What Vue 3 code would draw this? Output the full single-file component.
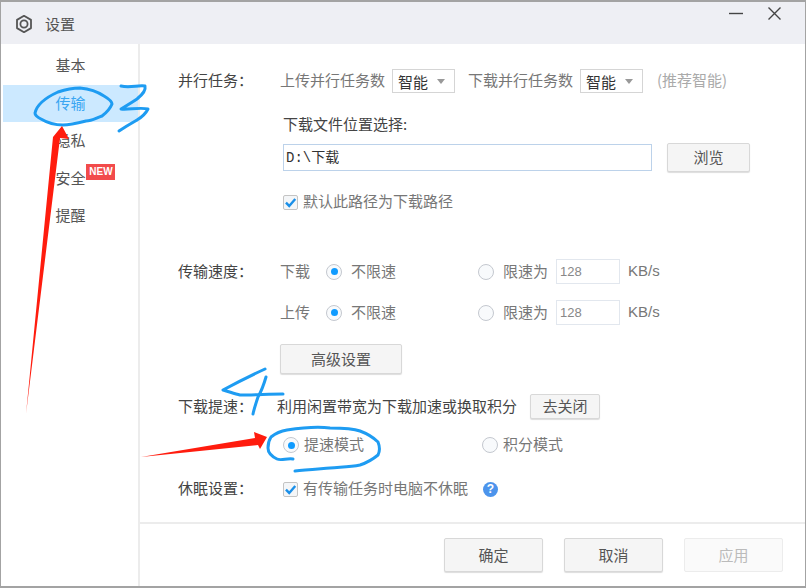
<script setup>
const menu = [
  { name: "基本" },
  { name: "传输", active: true },
  { name: "隐私" },
  { name: "安全", badge: "NEW" },
  { name: "提醒" },
];
const speeds = [
  { label: "下载", gap: "gap-first" },
  { label: "上传", gap: "gap-next" },
];
</script>

<template>
  <div class="window">
    <header class="titlebar">
      <svg class="gear" width="20" height="20" viewBox="0 0 20 20" fill="none" stroke="#555" stroke-width="1.8">
        <path d="M10 1.8 17 5.9V14.1L10 18.2 3 14.1V5.9Z" stroke-linejoin="round" />
        <circle cx="10" cy="10" r="3.6" />
      </svg>
      <span class="title">设置</span>
      <svg class="win-btns" width="54" height="16" viewBox="0 0 54 16" fill="none" stroke="#444" stroke-width="1.4">
        <path d="M0 7.5H14" />
        <path d="M39.5 1.5 51.5 13.5M51.5 1.5 39.5 13.5" />
      </svg>
    </header>

    <div class="body">
      <nav class="sidebar">
        <div v-for="item in menu" :key="item.name" class="menu-item" :class="{ active: item.active }">
          <span class="menu-text">
            {{ item.name }}
            <span v-if="item.badge" class="badge">{{ item.badge }}</span>
          </span>
        </div>
      </nav>

      <div class="main">
        <div class="content">
          <div class="row row-task">
            <span class="label">并行任务：</span>
            <span class="muted">上传并行任务数</span>
            <div class="select first">智能<i class="caret"></i></div>
            <span class="muted second-task">下载并行任务数</span>
            <div class="select second">智能<i class="caret"></i></div>
            <span class="hint">(推荐智能)</span>
          </div>

          <div class="row row-path-title">下载文件位置选择:</div>
          <div class="row row-path">
            <input class="path" value="D:\下载" readonly />
            <button class="btn browse">浏览</button>
          </div>
          <div class="row row-check">
            <span class="check"><svg width="13" height="13" viewBox="0 0 12 12" fill="none" stroke="#1a8fe8" stroke-width="2.2"><path d="M1.8 6.2 4.8 9.2 10.4 2.8" /></svg></span>
            <span class="muted">默认此路径为下载路径</span>
          </div>

          <div v-for="(s, i) in speeds" :key="s.label" class="row row-speed" :class="s.gap">
            <span class="label"><template v-if="i === 0">传输速度：</template></span>
            <span class="muted speed-name">{{ s.label }}</span>
            <span class="radio on"></span>
            <span class="muted nolimit">不限速</span>
            <span class="radio"></span>
            <span class="muted limit">限速为</span>
            <div class="num">128</div>
            <span class="muted unit">KB/s</span>
          </div>

          <div class="row row-adv">
            <span class="label"></span>
            <button class="btn adv">高级设置</button>
          </div>

          <div class="row row-accel">
            <span class="label accel-label">下载提速：</span>
            <span class="dark">利用闲置带宽为下载加速或换取积分</span>
            <button class="btn off">去关闭</button>
          </div>
          <div class="row row-mode">
            <span class="radio on"></span>
            <span class="muted mode-a">提速模式</span>
            <span class="radio"></span>
            <span class="muted mode-b">积分模式</span>
          </div>

          <div class="row row-sleep">
            <span class="label sleep-label">休眠设置：</span>
            <span class="check"><svg width="13" height="13" viewBox="0 0 12 12" fill="none" stroke="#1a8fe8" stroke-width="2.2"><path d="M1.8 6.2 4.8 9.2 10.4 2.8" /></svg></span>
            <span class="muted">有传输任务时电脑不休眠</span>
            <span class="help">?</span>
          </div>
        </div>

        <footer class="footer">
          <button class="btn foot">确定</button>
          <button class="btn foot">取消</button>
          <button class="btn foot disabled">应用</button>
        </footer>
      </div>
    </div>

    <!-- hand drawn marks on top of the screenshot -->
    <svg class="marks" width="806" height="588" viewBox="0 0 806 588" fill="none">
      <g stroke="#1e9cf2" stroke-width="3" stroke-linecap="round" stroke-linejoin="round">
        <path d="M35 113C37 104 47 97 58 92 67 89 74 88 80 88 90 89 98 92 104 96 109 99 112 102 112 104 110 109 106 113 102 116 96 118 92 121 86 121 78 123 70 125 63 125 54 125 46 122 41 119 37 117 35 115 35 113Z" />
        <path d="M121 86C130 88 138 85 145 86 146 90 142 95 137 99 131 103 126 106 121 109 128 110 140 107 148 109 146 113 142 117 137 120 130 124 125 127 119 131" />
        <path d="M265 369C252 375 236 383 223 390 230 392 235 394 240 395 254 395 270 394 283 394" />
        <path d="M266 377C264 384 262 390 258 397 256 403 254 409 253 414" />
        <path d="M293 459C287 458 281 461 277 459 271 456 268 453 268 448 268 443 269 440 271 437 276 433 281 431 287 430 300 428 315 426 330 428 342 428 352 428 360 431 368 434 374 438 378 442 380 447 380 451 378 455 372 460 366 463 360 465 350 467 340 467 330 468 318 469 305 470 295 471" />
      </g>
      <path fill="#ff1c0e" d="M62 126 69 139 60 138 26 414 53 137 53 137Z" />
      <path fill="#ff1c0e" d="M141 457 255 438 254 432 267 437 260 449 258 445Z" />
    </svg>
  </div>
</template>

<style scoped>
.window {
  position: relative;
  box-sizing: border-box;
  width: 806px;
  height: 588px;
  display: flex;
  flex-direction: column;
  background: #fff;
  border: 1px solid #a3a3a3;
  border-top-width: 2px;
  border-bottom-width: 2px;
  font-family: "Noto Sans CJK SC", "Liberation Sans", sans-serif;
  font-size: 15px;
  color: #555;
  overflow: hidden;
}

.titlebar {
  flex: none;
  height: 42px;
  display: flex;
  align-items: flex-start;
  background: #eeeff4;
}

.gear {
  margin: 12px 0 0 13px;
}

.title {
  margin: 11px 0 0 11px;
  line-height: 22px;
  color: #555;
}

.win-btns {
  margin: 4px 0 0 auto;
  margin-right: 22px;
}

.body {
  flex: 1;
  display: flex;
  min-height: 0;
}

.sidebar {
  flex: none;
  width: 137px;
  padding-top: 3px;
  border-right: 2px solid #ececec;
}

.menu-item {
  height: 37.5px;
  margin-left: 2px;
  display: flex;
  align-items: center;
  justify-content: center;
}

.menu-text {
  position: relative;
  padding-bottom: 2px;
  color: #555;
}

.menu-item.active {
  background: #cce9ff;
}

.menu-item.active .menu-text {
  color: #3aa6f2;
}

.badge {
  position: absolute;
  left: 31px;
  top: -3px;
  width: 29px;
  height: 16px;
  background: #f24b4b;
  color: #fff;
  font-family: "Liberation Sans", sans-serif;
  font-size: 10px;
  font-weight: bold;
  line-height: 16px;
  text-align: center;
}

.main {
  flex: 1;
  display: flex;
  flex-direction: column;
  min-width: 0;
}

.content {
  flex: 1;
  padding: 25px 0 0 38px;
}

.row {
  display: flex;
  align-items: center;
  white-space: nowrap;
}

.label {
  flex: none;
  width: 102px;
  padding-bottom: 2px;
  color: #444;
}

.muted {
  padding-bottom: 2px;
  color: #777;
}

.dark {
  padding-bottom: 2px;
  color: #444;
}

.hint {
  margin-left: 14px;
  padding-bottom: 2px;
  color: #aaa;
}

.row-task .label,
.row-task .muted,
.row-task .hint,
.row-check .muted,
.row-mode .muted,
.row-sleep .label,
.row-sleep .muted {
  padding-bottom: 4px;
}

.row-task {
  height: 24px;
}

.select {
  box-sizing: border-box;
  width: 63px;
  height: 24px;
  padding-left: 5px;
  display: flex;
  align-items: center;
  border: 1px solid #d5d5d5;
  color: #333;
}

.select.first {
  margin-left: 7px;
}

.select.second {
  margin-left: 7px;
}

.second-task {
  margin-left: 13px;
}

.caret {
  margin: 0 0 0 9px;
  border: 4.5px solid transparent;
  border-top: 5px solid #999;
  border-bottom: 0;
}

.row-path-title {
  height: 20px;
  margin: 20px 0 0 105px;
  color: #444;
}

.row-path {
  height: 29px;
  margin: 10px 0 0 105px;
}

.path {
  box-sizing: border-box;
  width: 369px;
  height: 27px;
  padding: 0 2px 3px;
  border: 1px solid #bcd2ea;
  outline: none;
  font-family: "Liberation Mono", "Noto Sans CJK SC", monospace;
  font-size: 14px;
  color: #333;
}

.btn {
  box-sizing: border-box;
  padding: 0 0 2px;
  background: #f5f5f5;
  border: 1px solid #d8d8d8;
  border-radius: 2px;
  box-shadow: 0 1px 1px #ddd;
  font-family: inherit;
  font-size: 15px;
  color: #555;
}

.browse {
  width: 83px;
  height: 29px;
  margin-left: 15px;
}

.row-check {
  height: 20px;
  margin: 20px 0 0 105px;
}

.check {
  flex: none;
  box-sizing: border-box;
  width: 15px;
  height: 15px;
  margin-right: 5px;
  display: flex;
  align-items: center;
  justify-content: center;
  background: #f4f6f8;
  border: 1px solid #c4c4c4;
  border-radius: 2px;
}

.row-speed {
  height: 25px;
}

.gap-first {
  margin-top: 47px;
}

.gap-next {
  margin-top: 16px;
}

.speed-name {
  width: 46px;
}

.radio {
  flex: none;
  box-sizing: border-box;
  width: 16px;
  height: 16px;
  display: flex;
  align-items: center;
  justify-content: center;
  background: #f8fafc;
  border: 1px solid #c4c8cf;
  border-radius: 50%;
}

.radio.on::after {
  content: "";
  width: 7px;
  height: 7px;
  background: #0f9bff;
  border-radius: 50%;
}

.nolimit {
  width: 127px;
  margin-left: 9px;
}

.limit {
  margin-left: 9px;
}

.num {
  box-sizing: border-box;
  width: 64px;
  height: 25px;
  margin-left: 8px;
  padding-left: 3px;
  border: 1px solid #e2e7ee;
  font-family: "Liberation Sans", sans-serif;
  font-size: 13px;
  line-height: 23px;
  color: #888;
}

.unit {
  margin-left: 8px;
  font-family: "Liberation Sans", sans-serif;
  font-size: 15px;
}

.row-adv {
  height: 30px;
  margin-top: 19px;
}

.adv {
  width: 122px;
  height: 30px;
}

.row-accel {
  height: 25px;
  margin-top: 20px;
}

.accel-label {
  width: 99px;
}

.off {
  width: 70px;
  height: 25px;
  margin-left: 13px;
}

.row-mode {
  height: 20px;
  margin: 16px 0 0 105px;
}

.mode-a {
  width: 178px;
  margin-left: 5px;
}

.mode-b {
  margin-left: 5px;
}

.row-sleep {
  height: 20px;
  margin-top: 24px;
}

.sleep-label {
  width: 105px;
}

.help {
  flex: none;
  width: 15px;
  height: 15px;
  margin-left: 15px;
  background: #4c94ec;
  border-radius: 50%;
  font-family: "Liberation Sans", sans-serif;
  font-size: 12px;
  font-weight: bold;
  line-height: 15px;
  text-align: center;
  color: #fff;
}

.footer {
  flex: none;
  height: 64px;
  display: flex;
  justify-content: flex-end;
  gap: 21px;
  padding: 14px 22px 0 0;
  box-sizing: border-box;
  border-top: 2px solid #ececec;
}

.foot {
  width: 99px;
  height: 34px;
}

.foot.disabled {
  background: #fafafa;
  border-color: #ececec;
  box-shadow: none;
  color: #bbb;
}

.marks {
  position: absolute;
  top: -2px;
  left: -1px;
  pointer-events: none;
}
</style>
